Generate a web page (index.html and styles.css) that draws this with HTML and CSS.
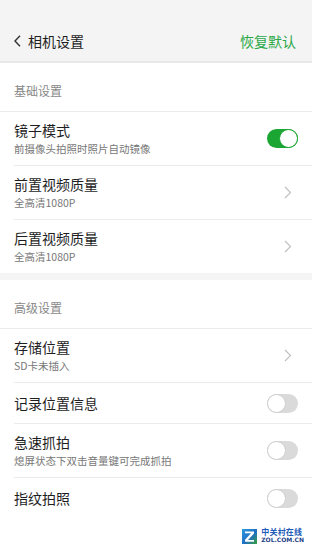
FILE: index.html
```html
<!DOCTYPE html>
<html lang="zh-CN">
<head>
<meta charset="utf-8">
<title>相机设置</title>
<link rel="stylesheet" href="styles.css">
</head>
<body>
<div class="page">
  <header class="topbar">
    <div class="back">
      <svg class="back-icon" width="7" height="12" viewBox="0 0 7 12"><path d="M6 0.8 L1 6 L6 11.2" fill="none" stroke="#333" stroke-width="1.4"/></svg>
      <span class="title">相机设置</span>
    </div>
    <span class="reset">恢复默认</span>
  </header>

  <div class="section-head">基础设置</div>
  <ul class="list">
    <li class="row">
      <div class="text"><div class="name">镜子模式</div><div class="desc">前摄像头拍照时照片自动镜像</div></div>
      <span class="switch on"><span class="knob"></span></span>
    </li>
    <li class="row">
      <div class="text"><div class="name">前置视频质量</div><div class="desc">全高清1080P</div></div>
      <svg class="chev" width="8" height="13" viewBox="0 0 8 13"><path d="M1 1 L6.5 6.5 L1 12" fill="none" stroke="#bdbdbd" stroke-width="1.1"/></svg>
    </li>
    <li class="row">
      <div class="text"><div class="name">后置视频质量</div><div class="desc">全高清1080P</div></div>
      <svg class="chev" width="8" height="13" viewBox="0 0 8 13"><path d="M1 1 L6.5 6.5 L1 12" fill="none" stroke="#bdbdbd" stroke-width="1.1"/></svg>
    </li>
  </ul>
  <div class="band"></div>

  <div class="section-head">高级设置</div>
  <ul class="list">
    <li class="row">
      <div class="text"><div class="name">存储位置</div><div class="desc">SD卡未插入</div></div>
      <svg class="chev" width="8" height="13" viewBox="0 0 8 13"><path d="M1 1 L6.5 6.5 L1 12" fill="none" stroke="#bdbdbd" stroke-width="1.1"/></svg>
    </li>
    <li class="row single">
      <div class="text"><div class="name">记录位置信息</div></div>
      <span class="switch"><span class="knob"></span></span>
    </li>
    <li class="row">
      <div class="text"><div class="name">急速抓拍</div><div class="desc">熄屏状态下双击音量键可完成抓拍</div></div>
      <span class="switch"><span class="knob"></span></span>
    </li>
    <li class="row single">
      <div class="text"><div class="name">指纹拍照</div></div>
      <span class="switch"><span class="knob"></span></span>
    </li>
  </ul>

  <div class="watermark">
    <svg class="zol-icon" width="15" height="15" viewBox="0 0 15 15">
      <defs>
        <linearGradient id="zg" x1="0" y1="0" x2="1" y2="1">
          <stop offset="0" stop-color="#2b9be0"/>
          <stop offset="0.55" stop-color="#1f6fc4"/>
          <stop offset="1" stop-color="#3aa23a"/>
        </linearGradient>
      </defs>
      <rect x="0" y="0" width="15" height="15" fill="url(#zg)"/>
      <polygon points="3,2.5 12,2.5 12,4.5 6,11 12,11 12,12.8 3,12.8 3,10.8 9,4.3 3,4.3" fill="#ffffff"/>
    </svg>
    <div class="zol-text">
      <span class="zol-cn">中关村在线</span>
      <span class="zol-en">ZOL.COM.CN</span>
    </div>
  </div>
</div>
</body>
</html>
```

FILE: styles.css
```css
* { box-sizing: border-box; }
html, body { margin: 0; padding: 0; background: #ffffff; }
body {
  font-family: "Noto Sans CJK SC", "Noto Sans", sans-serif;
  color: #222;
}
.page {
  position: relative;
  width: 312px;
  height: 555px;
  overflow: hidden;
  background: #fff;
}
.topbar {
  height: 63px;
  background: #f4f4f4;
  border-bottom: 2px solid #e9e9e9;
  padding: 31px 16px 0 14px;
  display: flex;
  justify-content: space-between;
  align-items: flex-start;
}
.back {
  display: flex;
  align-items: center;
  height: 20px;
}
.back-icon { display: block; margin-right: 7px; }
.title {
  font-size: 14px;
  line-height: 20px;
  color: #1e1e1e;
}
.reset {
  font-size: 14px;
  line-height: 20px;
  color: #2aa847;
}
.section-head {
  height: 49px;
  padding: 20px 14px 0;
  font-size: 12px;
  line-height: 16px;
  color: #888;
  border-bottom: 1px solid #ececec;
}
.list {
  list-style: none;
  margin: 0;
  padding: 0 0 0 14px;
}
.row {
  display: flex;
  align-items: center;
  justify-content: space-between;
  padding: 8px 14px 8px 0;
  border-bottom: 1px solid #ececec;
  min-height: 53px;
}
.row:last-child { border-bottom: none; min-height: 52px; }
.row.single { min-height: 41px; padding-top: 10px; padding-bottom: 10px; }
.row.single:last-child { min-height: 40px; }
.name {
  font-size: 14px;
  line-height: 20px;
  color: #1e1e1e;
}
.desc {
  margin-top: 1px;
  font-size: 10.5px;
  line-height: 16px;
  color: #777;
}
.chev { display: block; margin-right: 6px; }
.switch {
  position: relative;
  display: block;
  width: 31px;
  height: 19px;
  border-radius: 10px;
  background: #dadada;
}
.switch .knob {
  position: absolute;
  top: 0;
  left: 0;
  width: 19px;
  height: 19px;
  border-radius: 50%;
  background: #fff;
  border: 1px solid #cfcfcf;
}
.switch.on { background: #1ba634; }
.switch.on .knob {
  left: auto;
  right: 0;
  border-color: #1ba634;
}
.band {
  height: 7px;
  background: #f5f5f5;
}
.watermark {
  position: absolute;
  right: 8px;
  bottom: 11px;
  display: flex;
  align-items: center;
}
.zol-icon { display: block; margin-right: 4px; }
.zol-text {
  display: flex;
  flex-direction: column;
  line-height: 8px;
}
.zol-cn {
  font-size: 8px;
  color: #1f5bb8;
  font-weight: bold;
  letter-spacing: 0.2px;
}
.zol-en {
  font-family: "DejaVu Sans", sans-serif;
  font-size: 6px;
  color: #1c3f8a;
  font-weight: bold;
}
```
